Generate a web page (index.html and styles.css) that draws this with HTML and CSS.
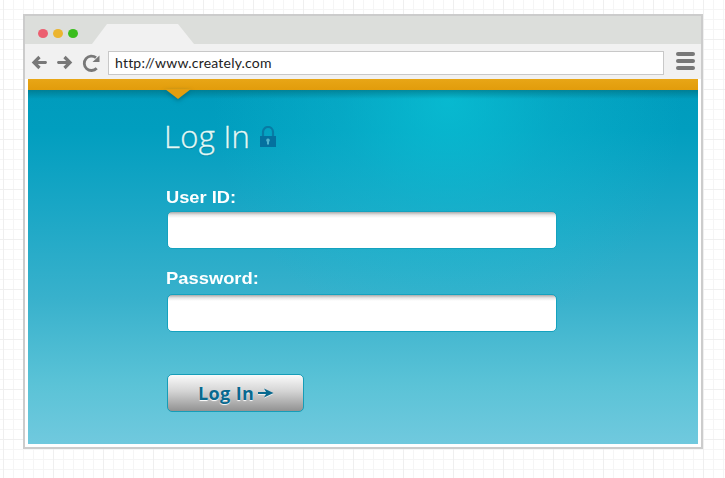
FILE: index.html
```html
<!DOCTYPE html>
<html lang="en">
<head>
<meta charset="utf-8">
<title>Log In</title>
<link rel="stylesheet" href="styles.css">
</head>
<body>
<main class="browser">
  <div class="tabs">
    <span class="dot red"></span><span class="dot yellow"></span><span class="dot green"></span>
    <div class="tab"></div>
  </div>
  <div class="toolbar">
    <svg class="nav" viewBox="0 0 76 24" fill="none" stroke="#787878">
      <path d="M9.500 6L4 11.500l5.500 5.500M5 11.500H16" stroke-width="3.200"/><circle cx="15.500" cy="11.500" r="1.400" fill="#787878" stroke="none"/>
      <path d="M34.500 6L40 11.500l-5.500 5.500M39 11.500H28" stroke-width="3.200"/><circle cx="28.500" cy="11.500" r="1.400" fill="#787878" stroke="none"/>
      <path d="M66 6.700A7.200 7.200 0 1 0 66.700 17.300" stroke-width="2.800"/>
      <path d="M69.500 4.500v6.500H62.500z" fill="#787878" stroke="none"/>
    </svg>
    <div class="url">http://www.creately.com</div>
    <div class="menu"><i></i><i></i><i></i></div>
  </div>
  <section class="page">
    <div class="accent"><svg class="pointer" viewBox="0 0 26 12"><path d="M0 0H26L13 10z" fill="#e49e0e"/></svg></div>
    <form class="login">
      <h1><span class="title">Log In</span>
        <svg class="lock" viewBox="0 0 18 22"><path d="M4 11V6a5 5 0 0 1 10 0V11" fill="none" stroke="#087ba4" stroke-width="2.200"/><path d="M1 10h16v11H1z" fill="#04719f"/><path d="M9 12.500a1.800 1.800 0 0 1 1 3.300V18.500H8V15.800a1.800 1.800 0 0 1 1-3.300z" fill="#52b5cf"/></svg>
      </h1>
      <label class="user">User ID:</label>
      <div class="field"></div>
      <label class="pass">Password:</label>
      <div class="field second"></div>
      <div class="button"><span>Log In</span><svg class="arrow" viewBox="0 0 16 10"><path d="M0 4h8L6 .500L15.500 5L6 9.500L8 6H0z" fill="#08698f"/></svg></div>
    </form>
  </section>
</main>
</body>
</html>
```
FILE: styles.css
```css
* { box-sizing: border-box; }
body {
  margin: 0;
  padding: 14px 0 0 23px;
  height: 478px;
  overflow: hidden;
  font-family: "Liberation Sans", sans-serif;
  background:
    linear-gradient(90deg, #efefef 1px, transparent 1px) 3px 0 / 50px 50px,
    linear-gradient(#efefef 1px, transparent 1px) 0 39px / 50px 50px,
    linear-gradient(90deg, #f5f5f5 1px, transparent 1px) 3px 0 / 10px 10px,
    linear-gradient(#f5f5f5 1px, transparent 1px) 0 9px / 10px 10px,
    #fff;
}
.browser {
  width: 680px;
  height: 435px;
  border: 2px solid #ccc;
  background: #fff;
}
.tabs {
  height: 28px;
  display: flex;
  align-items: flex-end;
  padding-left: 13px;
  gap: 5px;
  background: #dcdedb;
}
.dot { width: 10px; height: 9px; margin-bottom: 6px; border-radius: 50%; }
.red { background: #ec5f70; }
.yellow { background: #ebb52f; }
.green { background: #3abd1d; }
.tab {
  width: 102px;
  height: 20px;
  margin-left: 9px;
  background: #f1f1f1;
  clip-path: polygon(15px 0, 86px 0, 100% 100%, 0 100%);
}
.toolbar {
  height: 35px;
  display: flex;
  align-items: flex-start;
  background: #f1f1f1;
  padding: 7px 6px 0 5px;
}
.nav { width: 76px; height: 24px; margin: 0 2px 0 0; }
.url {
  width: 556px;
  height: 24px;
  border: 1px solid #c8c8c8;
  background: #fff;
  padding-left: 6px;
  font: 14px/22px Lato, sans-serif;
  letter-spacing: .2px;
  color: #222;
}
.menu { width: 19px; margin: 1px 0 0 12px; display: grid; gap: 3px; }
.menu i { height: 4px; border-radius: 2px; background: #787878; }
.page {
  width: 670px;
  height: 365px;
  margin-left: 3px;
  background:
    linear-gradient(#006c7b99, #008ba000 9px) 0 11px / 100% 100% no-repeat,
    radial-gradient(ellipse 235px 240px at 420px 22px, #0bc6d8b0, #10c0d455 45%, #20c0d400),
    linear-gradient(#009bbc 0, #019ebf 14%, #18a6c5 34%, #38b1cc 60%, #5bc3d7 84%, #70c9de 100%);
}
.accent { height: 11px; background: linear-gradient(#e8a616, #e29c0b); position: relative; }
.pointer {
  position: absolute;
  left: 137px;
  top: 10px;
  width: 26px;
  height: 12px;
  overflow: visible;
  filter: drop-shadow(0 2px 2px #00576388);
}
.login { padding: 27px 0 0 138px; display: flex; flex-direction: column; }
h1 {
  margin: 0 0 0 -2px;
  height: 40px;
  display: flex;
  align-items: flex-start;
  font: 300 31px/38px "Open Sans", sans-serif;
  color: #e4f8f5;
}
.title {
  width: 95px;
  white-space: nowrap;
  letter-spacing: .3px;
  -webkit-text-stroke: .3px #e4f8f5;
  text-shadow: 0 1px 1px #00698188;
}
.lock { width: 18px; height: 22px; margin-top: 9px; }
label {
  height: 22px;
  font-size: 17px;
  font-weight: bold;
  line-height: 22px;
  color: #fff;
  transform-origin: left;
}
.user { margin-top: 30px; transform: scaleX(1.075); }
.pass { margin-top: 19px; transform: scaleX(1.08); }
.field {
  width: 390px;
  height: 38px;
  margin: 2px 0 0 1px;
  border: 1px solid #14a2bf;
  border-radius: 5px;
  background: linear-gradient(#aaa, #e8e8e8 3px, #fff 6px);
}
.second { margin-top: 4px; }
.button {
  width: 137px;
  height: 38px;
  margin: 42px 0 0 1px;
  padding-left: 30px;
  display: flex;
  align-items: center;
  border: 1px solid #169db8;
  border-radius: 5px;
  background: linear-gradient(#fafafa, #d4d4d4 45%, #929292);
  font: 700 18px/34px "Open Sans", sans-serif;
  letter-spacing: .4px;
  color: #08698f;
  text-shadow: 0 1px 1px #fff;
}
.arrow { width: 16px; height: 10px; margin-left: 4px; filter: drop-shadow(0 1px 0 #eee); }
```
